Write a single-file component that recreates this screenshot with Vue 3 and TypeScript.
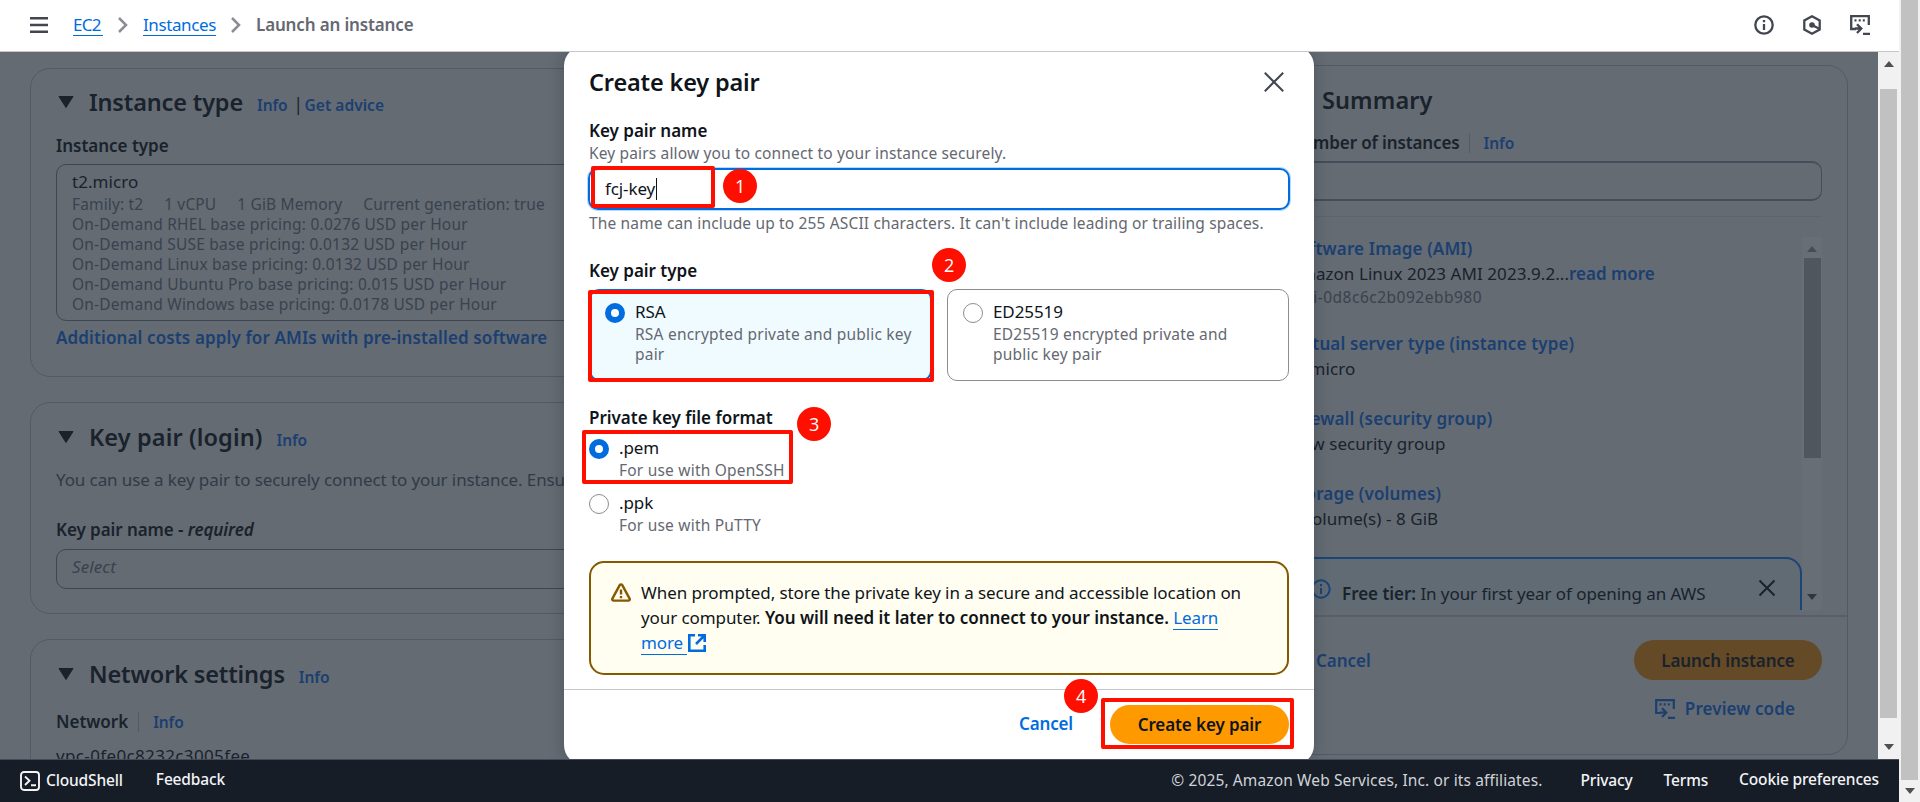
<script setup lang="ts">
import { ref } from 'vue'

interface SummaryItem {
  title: string
  value: string
  more?: string
  note?: string
}

const specs: string[] = ['Family: t2', '1 vCPU', '1 GiB Memory', 'Current generation: true']
const pricing: string[] = [
  'On-Demand RHEL base pricing: 0.0276 USD per Hour',
  'On-Demand SUSE base pricing: 0.0132 USD per Hour',
  'On-Demand Linux base pricing: 0.0132 USD per Hour',
  'On-Demand Ubuntu Pro base pricing: 0.015 USD per Hour',
  'On-Demand Windows base pricing: 0.0178 USD per Hour',
]
const summary: SummaryItem[] = [
  { title: 'Software Image (AMI)', value: 'Amazon Linux 2023 AMI 2023.9.2...', more: 'read more', note: 'ami-0d8c6c2b092ebb980' },
  { title: 'Virtual server type (instance type)', value: 't2.micro' },
  { title: 'Firewall (security group)', value: 'New security group' },
  { title: 'Storage (volumes)', value: '1 volume(s) - 8 GiB' },
]
const keyTypes = [
  { id: 'rsa', label: 'RSA', hint: 'RSA encrypted private and public key pair' },
  { id: 'ed', label: 'ED25519', hint: 'ED25519 encrypted private and public key pair' },
]
const formats = [
  { id: 'pem', label: '.pem', hint: 'For use with OpenSSH' },
  { id: 'ppk', label: '.ppk', hint: 'For use with PuTTY' },
]
const keyType = ref('rsa')
const format = ref('pem')
</script>

<template>
  <div class="window">
    <div class="frame">
      <header class="topbar">
        <svg class="burger" viewBox="0 0 18 16"><path d="M0 1.2h18M0 8h18M0 14.8h18" /></svg>
        <nav class="crumbs">
          <a class="link c-ec2">EC2</a>
          <svg class="chev" viewBox="0 0 10 16"><path d="M1 1l7 7-7 7" /></svg>
          <a class="link c-ins">Instances</a>
          <svg class="chev" viewBox="0 0 10 16"><path d="M1 1l7 7-7 7" /></svg>
          <b class="current">Launch an instance</b>
        </nav>
        <div class="tools">
          <svg viewBox="0 0 20 20"><circle cx="10" cy="10" r="8.7" /><path d="M10 9v6M10 5v2.2" /></svg>
          <svg viewBox="0 0 20 20">
            <path d="M10 1.3l7.7 4.2v9L10 18.7l-7.7-4.2v-9z" />
            <circle cx="10" cy="10" r="2.8" class="solid" /><path d="M10.5 10.3l6.3 3.3" />
          </svg>
          <svg viewBox="0 0 20 20">
            <path d="M6 14H1.2V1.2h17.6V10M4.5 5.3h2M8.7 5.3h2M12.8 5.3h2M5 13.5h5.5M7 9.3l4.3 4.3L7 18M13 18.8h7" />
          </svg>
        </div>
      </header>

      <div class="stage">
        <div class="page">
          <section class="left">
            <article class="card card-type">
              <div class="head">
                <svg class="tri" viewBox="0 0 16 12"><path d="M1 .5h14L8 11.5z" /></svg>
                <h2>Instance type</h2>
                <a class="info">Info</a><span class="bar">|</span><a class="info adv">Get advice</a>
              </div>
              <b class="label l-type">Instance type</b>
              <div class="select-box">
                <div class="main">t2.micro</div>
                <div class="hint specs"><span v-for="s in specs" :key="s">{{ s }}</span></div>
                <div v-for="p in pricing" :key="p" class="hint">{{ p }}</div>
              </div>
              <a class="blue costs">Additional costs apply for AMIs with pre-installed software</a>
            </article>

            <article class="card card-key">
              <div class="head">
                <svg class="tri" viewBox="0 0 16 12"><path d="M1 .5h14L8 11.5z" /></svg>
                <h2 class="t-key">Key pair (login)</h2><a class="info">Info</a>
              </div>
              <p class="desc">You can use a key pair to securely connect to your instance. Ensure</p>
              <b class="label l-name">Key pair name - <i>required</i></b>
              <div class="picker"><i>Select</i></div>
            </article>

            <article class="card card-net">
              <div class="head">
                <svg class="tri" viewBox="0 0 16 12"><path d="M1 .5h14L8 11.5z" /></svg>
                <h2 class="t-net">Network settings</h2><a class="info">Info</a>
              </div>
              <div class="row-label l-net"><b>Network</b><span class="vr"></span><a class="info">Info</a></div>
              <div class="vpc">vpc-0fe0c8232c3005fee</div>
            </article>
          </section>

          <aside class="right">
            <div class="sum-main">
              <div class="head">
                <svg class="tri" viewBox="0 0 16 12"><path d="M1 .5h14L8 11.5z" /></svg>
                <h2 class="t-sum">Summary</h2>
              </div>
              <div class="row-label l-num"><b>Number of instances</b><span class="vr"></span><a class="info">Info</a></div>
              <div class="num"></div>
              <div class="rule"></div>
              <div class="scroll">
                <div class="items">
                  <div v-for="s in summary" :key="s.title" class="item">
                    <a class="blue">{{ s.title }}</a>
                    <div class="value">{{ s.value }}<a v-if="s.more" class="blue">{{ s.more }}</a></div>
                    <div v-if="s.note" class="hint">{{ s.note }}</div>
                  </div>
                  <div class="tier">
                    <svg class="i" viewBox="0 0 20 20"><circle cx="10" cy="10" r="8.7" /><path d="M10 9v6M10 5v2.2" /></svg>
                    <span><b>Free tier:</b> In your first year of opening an AWS</span>
                    <svg class="x" viewBox="0 0 18 18"><path d="M1.5 1.5l15 15M16.5 1.5l-15 15" /></svg>
                  </div>
                </div>
                <div class="sbar">
                  <svg viewBox="0 0 10 6"><path d="M0 6h10L5 0z" /></svg>
                  <div class="thumb"></div>
                  <svg viewBox="0 0 10 6"><path d="M0 0h10L5 6z" /></svg>
                </div>
              </div>
            </div>
            <div class="sum-foot">
              <div class="actions">
                <a class="blue">Cancel</a>
                <button class="launch">Launch instance</button>
              </div>
              <div class="preview">
                <svg viewBox="0 0 20 20">
                  <path d="M6 14H1.2V1.2h17.6V10M4.5 5.3h2M8.7 5.3h2M12.8 5.3h2M5 13.5h5.5M7 9.3l4.3 4.3L7 18M13 18.8h7" />
                </svg>
                <a class="blue">Preview code</a>
              </div>
            </div>
          </aside>
        </div>

        <div class="vscroll inner">
          <svg viewBox="0 0 10 6"><path d="M0 6h10L5 0z" /></svg>
          <div class="thumb"></div>
          <svg viewBox="0 0 10 6"><path d="M0 0h10L5 6z" /></svg>
        </div>

        <div class="modal">
          <div class="m-body">
            <div class="m-head">
              <h2>Create key pair</h2>
              <svg viewBox="0 0 20 20"><path d="M.8.8l18.4 18.4M19.2.8L.8 19.2" /></svg>
            </div>
            <b class="label m-name">Key pair name</b>
            <div class="hint">Key pairs allow you to connect to your instance securely.</div>
            <div class="field"><span>fcj-key</span><i class="caret"></i></div>
            <div class="hint below">The name can include up to 255 ASCII characters. It can't include leading or trailing spaces.</div>
            <b class="label m-type">Key pair type</b>
            <div class="tiles">
              <div v-for="k in keyTypes" :key="k.id" class="tile" :class="{ on: keyType === k.id }" @click="keyType = k.id">
                <span class="radio" :class="{ on: keyType === k.id }"></span>
                <div><div class="opt">{{ k.label }}</div><div class="hint">{{ k.hint }}</div></div>
              </div>
            </div>
            <b class="label m-fmt">Private key file format</b>
            <div class="formats">
              <div v-for="f in formats" :key="f.id" class="fmt" @click="format = f.id">
                <span class="radio" :class="{ on: format === f.id }"></span>
                <div><div class="opt">{{ f.label }}</div><div class="hint">{{ f.hint }}</div></div>
              </div>
            </div>
            <div class="warn">
              <svg class="w-ico" viewBox="0 0 20 19">
                <path d="M10 1.4c-.6 0-1 .3-1.3.8L1.4 15.6c-.5 1 .1 2 1.2 2h14.8c1.1 0 1.7-1 1.2-2L11.3 2.2c-.3-.5-.7-.8-1.3-.8zM10 6.5v5M10 13v2.2" />
              </svg>
              <p>
                When prompted, store the private key in a secure and accessible location on<br />your computer.
                <b>You will need it later to connect to your instance.</b> <a class="link">Learn</a><br /><a class="link more">more</a><svg class="ext" viewBox="0 0 18 18"><path d="M7 1.3H1.3v15.4h15.4V11M10 1.3h6.7V8M16.3 1.7L8 10" /></svg>
              </p>
            </div>
          </div>
          <div class="m-foot">
            <a>Cancel</a>
            <button>Create key pair</button>
          </div>
        </div>

        <div class="marks">
          <div class="box b1"></div><div class="dot d1">1</div>
          <div class="box b2"></div><div class="dot d2">2</div>
          <div class="box b3"></div><div class="dot d3">3</div>
          <div class="box b4"></div><div class="dot d4">4</div>
        </div>
      </div>

      <footer class="foot">
        <svg viewBox="0 0 20 20"><rect x="1" y="1" width="18" height="18" rx="3" /><path d="M5 5.5l4.5 4.2L5 14M11 14.3h5" /></svg>
        <span class="f-shell">CloudShell</span>
        <span class="f-feed">Feedback</span>
        <span class="f-copy">© 2025, Amazon Web Services, Inc. or its affiliates.</span>
        <span class="f-priv">Privacy</span>
        <span class="f-term">Terms</span>
        <span class="f-cook">Cookie preferences</span>
      </footer>
    </div>
    <div class="vscroll outer">
      <div class="thumb"></div>
      <svg viewBox="0 0 10 6"><path d="M0 0h10L5 6z" /></svg>
    </div>
  </div>
</template>

<style>
body { margin: 0; overflow: hidden; background: #fff; }
</style>

<style scoped>
* { box-sizing: border-box; }
.window { display: flex; width: 1920px; height: 802px; overflow: hidden; font: 400 17px/25px "Noto Sans", "Open Sans", sans-serif; letter-spacing: -0.1px; color: #0f141a; }
.frame { width: 1899px; display: flex; flex-direction: column; }
svg { display: block; fill: none; stroke: currentColor; stroke-width: 2; flex: none; }
b, h2 { font-weight: 600; }
b { letter-spacing: -0.02px; }
h2 { margin: 0; font-size: 23.5px; line-height: 30px; letter-spacing: -0.16px; }
p { margin: 0; }
.label { display: block; }
button { font: 600 17px/25px "Noto Sans", "Open Sans", sans-serif; border: 0; border-radius: 20px; padding: 0; color: #0f141a; }

.topbar { height: 52px; flex: none; display: flex; align-items: center; padding: 0 29px 2px 30px; border-bottom: 1px solid #c6c6cd; color: #424650; }
.burger { width: 18px; height: 16px; stroke-width: 2.4; }
.crumbs { display: flex; align-items: center; margin-left: 25px; }
.link { color: #006ce0; line-height: 21px; border-bottom: 1px solid #006ce0; }
.c-ec2 { width: 30px; letter-spacing: -0.7px; }
.c-ins { width: 73px; letter-spacing: -0.4px; white-space: nowrap; }
.chev { width: 10px; height: 16px; margin: 0 15px; color: #8c8c94; stroke-width: 2.5; }
.current { color: #656871; letter-spacing: -0.15px; }
.tools { margin-left: auto; display: flex; gap: 28px; }
.tools svg { width: 20px; height: 20px; stroke-width: 2.3; }
.solid { fill: currentColor; stroke: none; }

.stage { position: relative; flex: 1; display: flex; overflow: hidden; min-height: 0; }
.page { width: 1878px; height: 707px; display: flex; align-items: flex-start; gap: 25px; padding-left: 30px; background: #646b73; color: #1a222c; overflow: hidden; }
.left { width: 1207px; padding-top: 16px; }
.card { border: 1px solid #525a66; border-radius: 20px; padding: 19px 25px 0; }
.card-type { height: 309px; padding-top: 18px; }
.card-key { height: 212px; margin-top: 25px; }
.card-net { height: 300px; margin-top: 25px; }
.head { display: flex; align-items: baseline; height: 30px; white-space: nowrap; }
.tri { width: 16px; height: 12px; margin: 0 15px 0 2px; align-self: center; }
.tri path { fill: #1a222c; stroke-width: 1; }
.t-key { letter-spacing: 0.12px; }
.t-sum { letter-spacing: 0.1px; }
.info { font-size: 15.5px; font-weight: 600; color: #1b3f70; letter-spacing: -0.1px; line-height: 20px; }
.head .info { margin-left: 14px; }
.bar { margin-left: 5px; font-size: 18px; width: 11px; text-align: center; }
.head .adv { margin-left: 1px; letter-spacing: 0.03px; }
.l-type { margin-top: 16px; }
.hint { font-size: 15.5px; line-height: 20px; letter-spacing: 0.155px; color: #656871; }
.tile .hint, .fmt .hint { letter-spacing: 0.21px; }
.page .hint { color: #3a424e; letter-spacing: 0.22px; }
.select-box { margin-top: 6px; height: 157px; border: 1px solid #3d4652; border-radius: 10px; padding: 4px 15px 0; }
.main { letter-spacing: 0.05px; }
.page .specs { display: flex; gap: 21px; letter-spacing: 0.14px; }
.blue { color: #1b3f70; font-weight: 600; letter-spacing: -0.04px; }
.costs { display: block; margin-top: 4px; letter-spacing: 0.12px; }
.desc { margin-top: 15px; color: #323a46; white-space: nowrap; }
.l-name { margin-top: 25px; letter-spacing: -0.07px; }
.picker { margin-top: 7px; height: 40px; border: 1px solid #3d4652; border-radius: 10px; padding: 4px 15px; color: #3a424e; letter-spacing: 0.1px; }
.row-label { display: flex; align-items: center; height: 25px; }
.vr { width: 1px; height: 20px; background: #525a66; margin: 0 15px 0 10px; }
.l-net { margin-top: 20px; }
.l-net .vr { margin-right: 14px; }
.vpc { margin-top: 9px; letter-spacing: 0.36px; }

.right { width: 586px; margin-top: 13px; border: 1px solid #525a66; border-radius: 20px; height: 690px; }
.sum-main { height: 549px; padding: 19px 25px 0 26px; }
.l-num { margin-top: 15px; }
.l-num b { letter-spacing: -0.12px; }
.l-num .vr { margin: 0 14px 0 9px; }
.num { margin-top: 6px; height: 40px; border: 1px solid #444d59; border-bottom-width: 2px; border-top-width: 2px; border-radius: 10px; }
.rule { height: 1px; background: #5c646d; margin-top: 15px; }
.scroll { margin-top: 20px; height: 373px; display: flex; overflow: hidden; }
.items { width: 513px; flex: none; }
.item { margin-bottom: 25px; }
.item > .blue { display: block; letter-spacing: 0.14px; position: relative; top: -1px; }
.value { white-space: nowrap; letter-spacing: 0.06px; position: relative; top: -1px; }
.item .hint { letter-spacing: 0.5px; }
.tier { height: 90px; border: 2px solid #1b4478; border-radius: 16px; background: #606b74; display: flex; padding: 18px 24px 0 20px; }
.tier .i { width: 20px; height: 20px; color: #1b4478; margin: 2px 11px 0 0; }
.tier span { padding-top: 4px; white-space: nowrap; letter-spacing: -0.07px; }
.tier .x { width: 18px; height: 18px; margin: 2px 0 0 auto; }
.sbar { width: 21px; background: #676e75; display: flex; flex-direction: column; align-items: center; padding: 9px 0 10px; }
.sbar svg { width: 10px; height: 6px; stroke: none; fill: #30363c; }
.sbar svg:first-child { fill: #464d54; }
.sbar .thumb { width: 17px; height: 200px; background: #4f565e; margin: 6px 0 auto; }
.sum-foot { border-top: 2px solid #585f6a; padding: 23px 25px 0 26px; }
.actions { display: flex; justify-content: space-between; align-items: center; padding-left: 27px; }
.launch { width: 188px; height: 40px; background: #644a26; color: #1a222c; letter-spacing: -0.1px; }
.preview { display: flex; align-items: center; justify-content: flex-end; gap: 10px; margin-top: 16px; padding-right: 27px; color: #1b3f70; }
.preview .blue { letter-spacing: 0.1px; }
.preview svg { width: 20px; height: 20px; stroke-width: 2.2; }

.vscroll { display: flex; flex-direction: column; background: #f1f1f1; flex: none; }
.vscroll svg { width: 10px; height: 6px; stroke: none; fill: #505050; }
.vscroll .thumb { background: #c1c1c1; width: 17px; }
.inner { width: 21px; align-items: center; justify-content: space-between; padding: 9px 0; }
.inner .thumb { height: 629px; margin: 0 0 auto; }
.inner svg:first-child { margin-bottom: 22px; }
.outer { width: 21px; padding-left: 2px; }
.outer .thumb { height: 780px; }
.outer svg { margin: 8px 0 0 4px; }

.modal { position: absolute; left: 564px; top: -6px; width: 750px; height: 719px; background: #fff; border-radius: 20px; box-shadow: 0 0 16px rgba(15, 20, 26, 0.25); overflow: hidden; }
.m-body { height: 643px; padding: 21px 25px 0; }
.m-head { display: flex; justify-content: space-between; align-items: center; height: 30px; padding-right: 5px; }
.m-head svg { width: 20px; height: 20px; color: #424650; }
.m-name { margin-top: 21px; }
.field { margin: 5px -1px 0; height: 42px; border: 2px solid #006ce0; border-radius: 10px; box-shadow: 0 0 0 1px #b8d9ff; display: flex; align-items: center; padding: 0 0 2px 15px; letter-spacing: -0.1px; }
.caret { width: 1px; height: 22px; background: #0f141a; margin-left: 1px; position: relative; top: 1px; }
.below { margin-top: 3px; white-space: nowrap; }
.m-type { margin-top: 25px; }
.tiles { display: grid; grid-template-columns: 343px 342px; gap: 15px; margin-top: 6px; }
.tile { height: 92px; border: 1px solid #8c8c94; border-radius: 10px; display: flex; gap: 10px; padding: 9px 15px 0 15px; }
.tile.on { border: 2px solid #006ce0; background: #f0fbff; padding: 8px 14px 0; }
.opt { line-height: 25px; }
.radio { width: 20px; height: 20px; border: 1.5px solid #8c8c94; border-radius: 50%; flex: none; margin-top: 4px; }
.radio.on { border: 6px solid #006ce0; background: #fff; }
.m-fmt { margin-top: 24px; }
.formats { margin-top: 5px; }
.fmt { display: flex; gap: 10px; height: 46px; margin-bottom: 9px; }
.warn { margin-top: 25px; height: 114px; border: 2px solid #855900; border-radius: 15px; background: #fffef0; display: flex; padding: 17px 20px 0; }
.w-ico { width: 20px; height: 19px; color: #855900; margin: 3px 10px 0 0; stroke-width: 2.4; }
.warn p { white-space: nowrap; letter-spacing: -0.085px; }
.warn .link { letter-spacing: -0.1px; }
.more { padding-right: 4px; }
.ext { display: inline-block; width: 18px; height: 18px; color: #006ce0; margin-left: 1px; vertical-align: -3px; stroke-width: 2.6; }
.m-foot { height: 76px; border-top: 1px solid #c6c6cd; display: flex; align-items: flex-start; justify-content: flex-end; padding: 15px 25px 0; }
.m-foot a { color: #006ce0; font-weight: 600; line-height: 38px; margin-right: 37px; letter-spacing: -0.15px; }
.m-foot button { width: 179px; height: 39px; background: #ff9900; letter-spacing: -0.1px; padding-bottom: 1px; }

.marks { position: absolute; inset: 0; pointer-events: none; }
.box { position: absolute; border: 4px solid #ff0f00; border-radius: 2px; }
.b1 { left: 591px; top: 114px; width: 124px; height: 42px; }
.b2 { left: 588px; top: 238px; width: 346px; height: 92px; }
.b3 { left: 582px; top: 378px; width: 211px; height: 54px; }
.b4 { left: 1101px; top: 646px; width: 193px; height: 51px; }
.dot { position: absolute; width: 34px; height: 34px; border-radius: 50%; background: #ff0f00; color: #fff; text-align: center; font: 400 18px/34px "Open Sans", sans-serif; }
.d1 { left: 723px; top: 117px; }
.d2 { left: 932px; top: 196px; }
.d3 { left: 797px; top: 355px; }
.d4 { left: 1064px; top: 627px; }

.foot { height: 43px; flex: none; background: #161d26; border-top: 1px solid #424b57; color: #f3f3f7; display: flex; align-items: center; padding: 0 20px 1px 20px; font-size: 15.5px; font-weight: 500; letter-spacing: -0.15px; }
.foot svg { width: 20px; height: 20px; stroke-width: 1.9; margin-right: 6px; }
.f-feed { margin-left: 33px; position: relative; top: -1px; }
.f-copy { margin-left: auto; font-weight: 400; letter-spacing: 0.12px; color: #d0d3d9; }
.f-priv { margin-left: 38px; }
.f-term { margin-left: 31px; }
.f-cook { margin-left: 31px; position: relative; top: -1px; }
</style>
